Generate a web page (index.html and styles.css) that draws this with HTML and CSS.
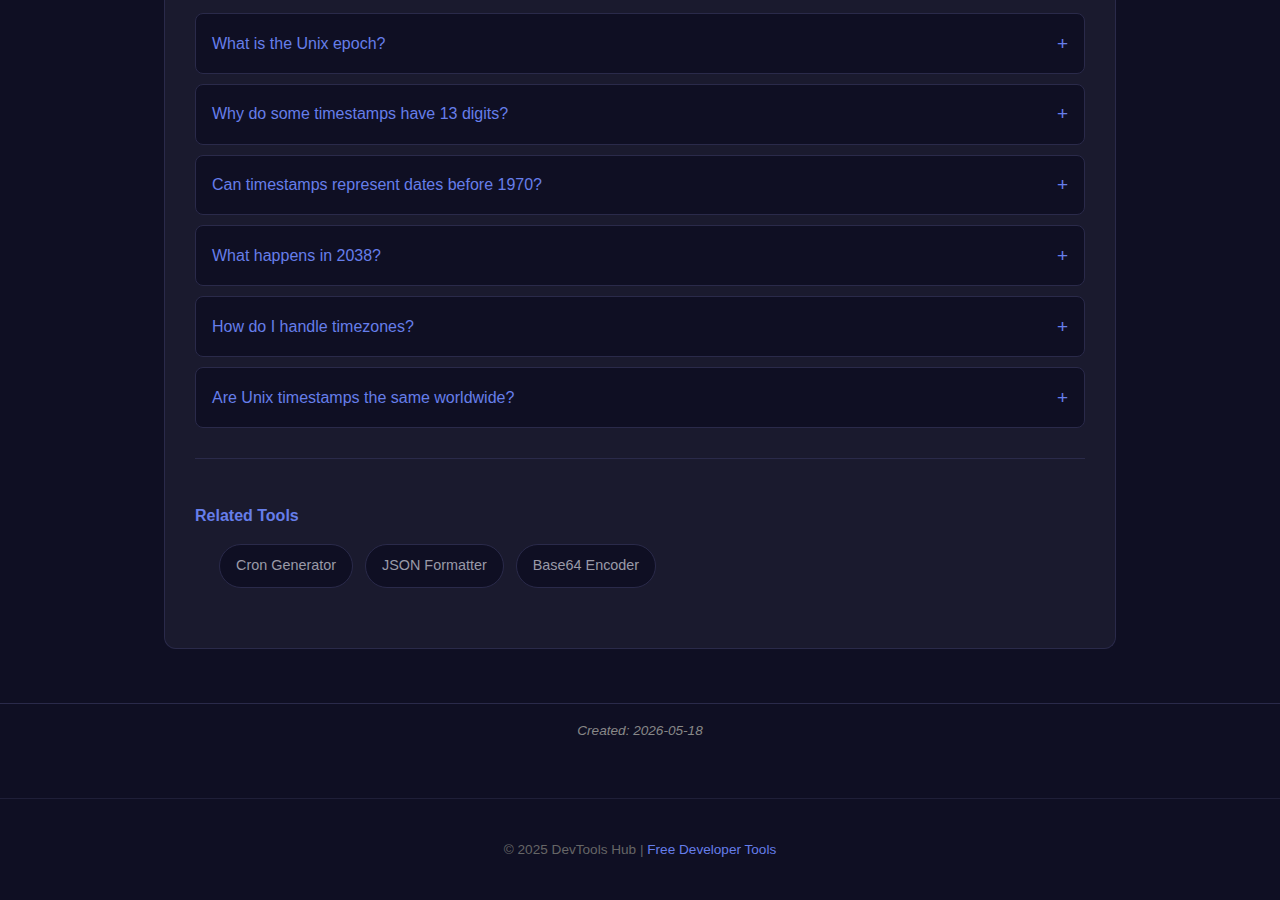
FILE: index.html
```html
<!DOCTYPE html>
<html lang="en">
<head>
<meta charset="utf-8">
<title>Unix Timestamp Converter - FAQ</title>
<link rel="stylesheet" href="styles.css">
</head>
<body>
<main class="page">
  <section class="card">
    <div class="faq">
      <div class="faq-item"><button class="faq-q"><span>What is the Unix epoch?</span><span class="plus">+</span></button></div>
      <div class="faq-item"><button class="faq-q"><span>Why do some timestamps have 13 digits?</span><span class="plus">+</span></button></div>
      <div class="faq-item"><button class="faq-q"><span>Can timestamps represent dates before 1970?</span><span class="plus">+</span></button></div>
      <div class="faq-item"><button class="faq-q"><span>What happens in 2038?</span><span class="plus">+</span></button></div>
      <div class="faq-item"><button class="faq-q"><span>How do I handle timezones?</span><span class="plus">+</span></button></div>
      <div class="faq-item"><button class="faq-q"><span>Are Unix timestamps the same worldwide?</span><span class="plus">+</span></button></div>
    </div>
    <hr class="divider">
    <div class="related">
      <h3 class="related-title">Related Tools</h3>
      <ul class="related-list">
        <li><a class="pill" href="#">Cron Generator</a></li>
        <li><a class="pill" href="#">JSON Formatter</a></li>
        <li><a class="pill" href="#">Base64 Encoder</a></li>
      </ul>
    </div>
  </section>
</main>
<div class="meta">
  <p class="created">Created: 2026-05-18</p>
</div>
<footer class="footer">
  <p>© 2025 DevTools Hub | <a href="#">Free Developer Tools</a></p>
</footer>
</body>
</html>
```

FILE: styles.css
```css
* { box-sizing: border-box; }
html, body { margin: 0; padding: 0; }
body {
  background: #0f0f23;
  font-family: "Liberation Sans", Arial, sans-serif;
  color: #e0e0e0;
}
.page {
  width: 952px;
  margin: 0 auto;
}
.card {
  background: #1a1a2e;
  border: 1px solid #2a2a4a;
  border-top: none;
  border-radius: 0 0 12px 12px;
  padding: 13px 30px 60px;
}
.faq-item {
  background: #0f0f23;
  border: 1px solid #2a2a4a;
  border-radius: 8px;
  margin-bottom: 10px;
}
.faq-q {
  display: flex;
  justify-content: space-between;
  align-items: center;
  width: 100%;
  background: none;
  border: none;
  padding: 20.6px 16px 19.4px;
  font-family: inherit;
  font-size: 16px;
  line-height: 18.8px;
  color: #667eea;
  text-align: left;
  cursor: pointer;
}
.plus {
  font-size: 19px;
  line-height: 18.8px;
  color: #667eea;
}
.divider {
  border: none;
  border-top: 1px solid #2a2a4a;
  margin: 30px 0 0;
  height: 0;
}
.related-title {
  margin: 48px 0 0;
  font-size: 16px;
  line-height: 18.4px;
  font-weight: 700;
  color: #667eea;
}
.related-list {
  list-style: none;
  display: flex;
  gap: 12px;
  margin: 19px 0 0;
  padding: 0 0 0 24px;
}
.pill {
  display: block;
  padding: 12px 16px;
  background: #0f0f23;
  border: 1px solid #2a2a4a;
  border-radius: 999px;
  font-size: 14.4px;
  line-height: 17.4px;
  color: #9a9aa8;
  text-decoration: none;
}
.meta {
  margin-top: 54px;
  border-top: 1px solid #2a2a4a;
  padding: 19px 0 59px;
  text-align: center;
}
.created {
  margin: 0;
  font-size: 13.6px;
  line-height: 16px;
  font-style: italic;
  color: #888;
}
.footer {
  border-top: 1px solid #1f1f38;
  padding: 43px 0 40px;
  text-align: center;
}
.footer p {
  margin: 0;
  font-size: 13.6px;
  line-height: 15px;
  color: #666;
}
.footer a {
  color: #667eea;
  text-decoration: none;
}
```
